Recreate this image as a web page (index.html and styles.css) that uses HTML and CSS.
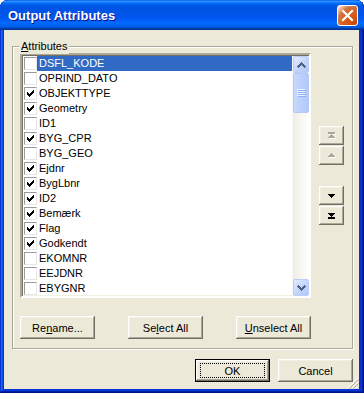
FILE: index.html
```html
<!DOCTYPE html>
<html>
<head>
<meta charset="utf-8">
<link rel="stylesheet" href="styles.css">
</head>
<body>
<div class="window">
  <div class="titlebar">
    <span class="title">Output Attributes</span>
    <button class="close" aria-label="Close">
      <svg width="13" height="13" viewBox="0 0 13 13"><path d="M2 2 L11 11 M11 2 L2 11" stroke="#fff" stroke-width="2.2" stroke-linecap="square"/></svg>
    </button>
  </div>
  <div class="client">
    <fieldset class="group">
      <legend class="legend"><u>A</u>ttributes</legend>
      <div class="group-main">
        <div class="listbox">
          <div class="rows">
            <div class="row selected"><span class="cb"></span><span class="lbl">DSFL_KODE</span></div>
            <div class="row"><span class="cb"></span><span class="lbl">OPRIND_DATO</span></div>
            <div class="row"><span class="cb checked"></span><span class="lbl">OBJEKTTYPE</span></div>
            <div class="row"><span class="cb checked"></span><span class="lbl">Geometry</span></div>
            <div class="row"><span class="cb"></span><span class="lbl">ID1</span></div>
            <div class="row"><span class="cb checked"></span><span class="lbl">BYG_CPR</span></div>
            <div class="row"><span class="cb"></span><span class="lbl">BYG_GEO</span></div>
            <div class="row"><span class="cb checked"></span><span class="lbl">Ejdnr</span></div>
            <div class="row"><span class="cb checked"></span><span class="lbl">BygLbnr</span></div>
            <div class="row"><span class="cb checked"></span><span class="lbl">ID2</span></div>
            <div class="row"><span class="cb checked"></span><span class="lbl">Bemærk</span></div>
            <div class="row"><span class="cb checked"></span><span class="lbl">Flag</span></div>
            <div class="row"><span class="cb checked"></span><span class="lbl">Godkendt</span></div>
            <div class="row"><span class="cb"></span><span class="lbl">EKOMNR</span></div>
            <div class="row"><span class="cb"></span><span class="lbl">EEJDNR</span></div>
            <div class="row"><span class="cb"></span><span class="lbl">EBYGNR</span></div>
          </div>
          <div class="vscroll">
            <div class="sbtn"><svg width="9" height="6" viewBox="0 0 9 6"><path d="M4 0h1v1h1v1h1v1h1v1h1v1H8v1H7V5H6V4H5V3H4v1H3v1H2v1H1V5H0V4h1V3h1V2h1V1h1z" fill="#4D6185"/></svg></div>
            <div class="thumb"><svg width="8" height="8" viewBox="0 0 8 8"><path d="M0 0h8v1H0zM0 2h8v1H0zM0 4h8v1H0zM0 6h8v1H0z" fill="#EEF4FE"/><path d="M1 1h8v1H1zM1 3h8v1H1zM1 5h8v1H1zM1 7h8v1H1z" fill="#8CB0F8"/></svg></div>
            <div class="track"></div>
            <div class="sbtn"><svg width="9" height="6" viewBox="0 0 9 6"><path d="M4 6h1V5h1V4h1V3h1V2h1V1H8V0H7v1H6v1H5v1H4V2H3V1H2V0H1v1H0v1h1v1h1v1h1v1h1z" fill="#4D6185"/></svg></div>
          </div>
        </div>
        <div class="movecol">
          <button class="mbtn" disabled>
            <svg width="9" height="8" viewBox="0 0 9 8"><path d="M2 1h7v2H2zM5 3h1v1h1v1h1v1h1v1H2V6h1V5h1V4h1z" fill="#fff"/><path d="M1 0h7v2H1zM4 2h1v1h1v1h1v1h1v1H1V5h1V4h1V3h1z" fill="#ACA899"/></svg>
          </button>
          <button class="mbtn" disabled>
            <svg width="9" height="6" viewBox="0 0 9 6"><path d="M5 1h1v1h1v1h1v1h1v1H2V4h1V3h1V2h1z" fill="#fff"/><path d="M4 0h1v1h1v1h1v1h1v1H1V3h1V2h1V1h1z" fill="#ACA899"/></svg>
          </button>
          <button class="mbtn gap-top">
            <svg width="7" height="4" viewBox="0 0 7 4"><path d="M0 0h7v1H0zM1 1h5v1H1zM2 2h3v1H2zM3 3h1v1H3z" fill="#000"/></svg>
          </button>
          <button class="mbtn">
            <svg width="7" height="6" viewBox="0 0 7 6"><path d="M0 0h7v1H0zM1 1h5v1H1zM2 2h3v1H2zM3 3h1v1H3zM0 4h7v2H0z" fill="#000"/></svg>
          </button>
        </div>
      </div>
      <div class="group-buttons">
        <button class="btn">Re<u>n</u>ame...</button>
        <button class="btn">Se<u>l</u>ect All</button>
        <button class="btn"><u>U</u>nselect All</button>
      </div>
    </fieldset>
    <div class="dialog-buttons">
      <button class="btn default"><span class="focus">OK</span></button>
      <button class="btn">Cancel</button>
    </div>
    <svg class="grip" width="12" height="12" viewBox="0 0 12 12">
      <path d="M11 1L1 11M11 5L5 11M11 9L9 11" stroke="#fff" stroke-width="1"/>
      <path d="M11.5 2.5L2.5 11.5M11.5 6.5L6.5 11.5M11.5 10.5L10.5 11.5" stroke="#ACA899" stroke-width="1"/>
    </svg>
  </div>
</div>
</body>
</html>
```
FILE: styles.css
```css
* { box-sizing: border-box; }
html, body { margin: 0; padding: 0; }
body {
  width: 364px;
  height: 393px;
  overflow: hidden;
  background: #fff;
  font-family: "Liberation Sans", Tahoma, sans-serif;
  font-size: 11px;
  color: #000;
}
.window {
  width: 364px;
  height: 393px;
  display: flex;
  flex-direction: column;
  background: #0831d9;
  border-radius: 8px 8px 0 0;
  box-shadow: inset -1px -1px #00138c, inset 1px 1px #0831d9, inset -2px -2px #001ea0, inset 2px 2px #166aee, inset -3px -3px #003bda, inset 3px 3px #0855dd;
  overflow: hidden;
}
.titlebar {
  height: 30px;
  flex: none;
  display: flex;
  align-items: center;
  justify-content: space-between;
  padding: 0 6px 0 8px;
  border-radius: 8px 8px 0 0;
  background: linear-gradient(to bottom, #0058ee 0%, #3593ff 4%, #288eff 6%, #127dff 8%, #036ffc 10%, #0262ee 14%, #0057e5 20%, #0054e3 24%, #0055eb 56%, #005bf5 66%, #026afe 76%, #0062ef 86%, #0052d6 92%, #0040ab 94%, #003092 100%);
}
.title {
  color: #fff;
  font-weight: bold;
  font-size: 13px;
  text-shadow: 1px 1px #0f1089;
  padding-top: 1px;
}
.close {
  width: 21px;
  height: 21px;
  padding: 0;
  margin-top: 1px;
  border: 1px solid #fff;
  border-radius: 3px;
  background: radial-gradient(circle at 90% 90%, #cc4600 0%, #dc6527 55%, #cd7546 70%, #ffccb2 90%, #fff 100%);
  display: flex;
  align-items: center;
  justify-content: center;
}
.close svg { display: block; }
.client {
  flex: 1;
  margin: 0 5px 4px 4px;
  background: #ECE9D8;
  padding: 16px 6px 0 8px;
  display: flex;
  flex-direction: column;
  position: relative;
}
.group {
  margin: 0;
  padding: 6px 0 9px 7px;
  width: 341px;
  height: 303px;
  border: 1px solid #ACA899;
  box-shadow: inset 1px 1px #fff, 1px 1px #fff;
  position: relative;
  min-width: 0;
}
.legend {
  position: absolute;
  top: -9px;
  left: 6px;
  padding: 0 2px;
  background: #ECE9D8;
  line-height: 16px;
}
.group-main {
  display: flex;
  align-items: flex-start;
  gap: 8px;
}
.listbox {
  width: 291px;
  height: 245px;
  display: flex;
  border-style: solid;
  border-width: 2px;
  border-color: #ACA899 #fff #fff #ACA899;
  box-shadow: inset 1px 1px #716F64, inset -1px -1px #F1EFE2;
  background: #fff;
  padding: 1px 0 0 1px;
}
.rows {
  flex: 1;
  display: flex;
  flex-direction: column;
}
.row {
  height: 15px;
  display: flex;
  align-items: center;
}
.cb {
  width: 13px;
  height: 13px;
  margin-left: 1px;
  flex: none;
  border-style: solid;
  border-width: 1px;
  border-color: #9A9A9A #E6E6E6 #E6E6E6 #9A9A9A;
  background: #fff;
}
.cb.checked {
  background: #fff url("data:image/svg+xml,%3Csvg xmlns='http://www.w3.org/2000/svg' width='11' height='11' viewBox='1 1 11 11'%3E%3Cpath d='M3 5h1v3H3z M4 6h1v3H4z M5 7h1v3H5z M6 6h1v3H6z M7 5h1v3H7z M8 4h1v3H8z M9 3h1v3H9z' fill='%23000'/%3E%3C/svg%3E") no-repeat 0 0;
}
.lbl {
  flex: 1;
  height: 15px;
  line-height: 15px;
  padding-left: 2px;
  white-space: nowrap;
}
.row.selected .lbl {
  background: #316AC5;
  color: #fff;
}
.vscroll {
  width: 17px;
  flex: none;
  display: flex;
  flex-direction: column;
  background: linear-gradient(to right, #EEEDE5, #FFFFFF);
  border-left: 1px solid #F7F7F3;
}
.sbtn {
  height: 17px;
  flex: none;
  border: 1px solid #B9CDF7;
  border-radius: 2px;
  background: linear-gradient(135deg, #E2EBFF, #C0D3FC 60%, #B1C8FA);
  display: flex;
  align-items: center;
  justify-content: center;
}
.thumb {
  height: 40px;
  flex: none;
  border: 1px solid #B3C8F5;
  border-radius: 2px;
  background: linear-gradient(to right, #C9D8FC, #BAD0FD 50%, #B2C9FB);
  display: flex;
  align-items: center;
  justify-content: center;
}
.thumb svg { overflow: visible; }
.track { flex: 1; }
.movecol {
  display: flex;
  flex-direction: column;
  gap: 1px;
  margin-top: 73px;
}
.mbtn {
  width: 25px;
  height: 19px;
  padding: 0;
  border: none;
  background: #ECE9D8;
  box-shadow: inset -1px -1px #716F64, inset 1px 1px #fff, inset -2px -2px #ACA899, inset 2px 2px #F1EFE2;
  display: flex;
  align-items: center;
  justify-content: center;
}
.mbtn.gap-top { margin-top: 20px; }
.mbtn svg { display: block; }
.group-buttons {
  margin-top: 18px;
  width: 291px;
  display: flex;
  justify-content: space-between;
}
.btn {
  width: 75px;
  height: 23px;
  padding: 0;
  border: none;
  background: #ECE9D8;
  box-shadow: inset -1px -1px #716F64, inset 1px 1px #fff, inset -2px -2px #ACA899, inset 2px 2px #F1EFE2;
  font-family: "Liberation Sans", Tahoma, sans-serif;
  font-size: 11px;
  color: #000;
  display: flex;
  align-items: center;
  justify-content: center;
}
.btn u { text-underline-offset: 1px; }
.dialog-buttons {
  margin-top: 10px;
  display: flex;
  justify-content: flex-end;
  gap: 8px;
}
.btn.default {
  border: 1px solid #000;
}
.focus {
  width: 65px;
  height: 15px;
  border: 1px dotted #000;
  display: flex;
  align-items: center;
  justify-content: center;
}
.grip {
  position: absolute;
  right: 0;
  bottom: 0;
}
```
